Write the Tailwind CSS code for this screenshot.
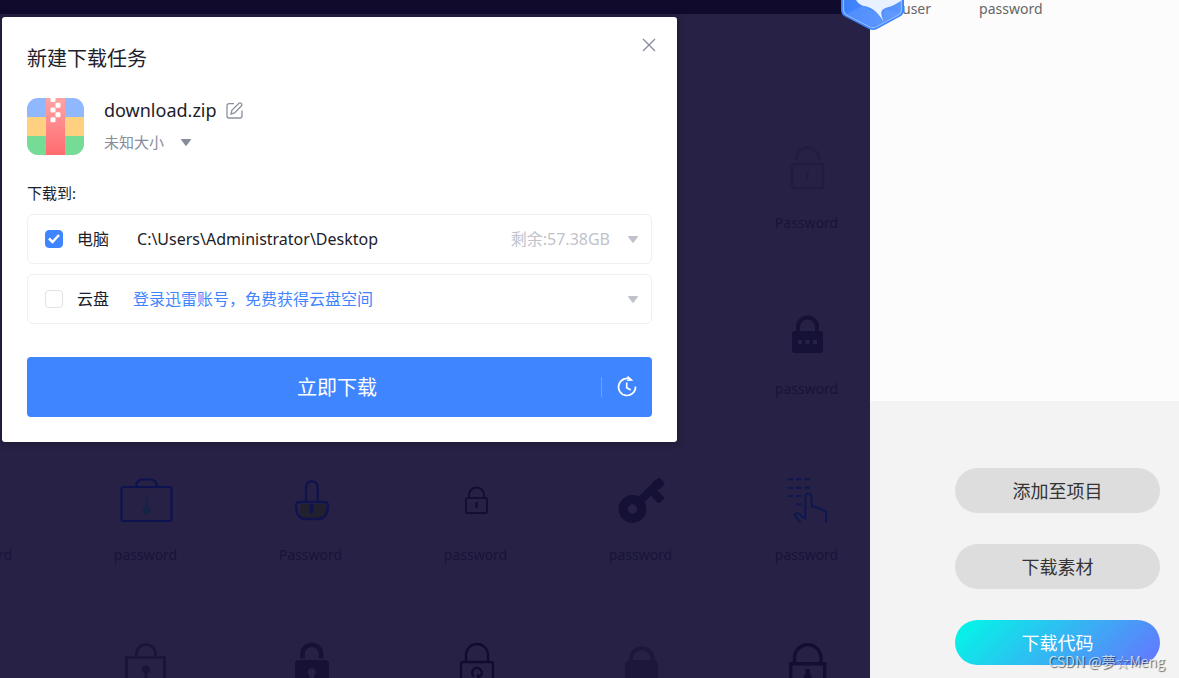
<!DOCTYPE html>
<html lang="zh-CN">
<head>
<meta charset="utf-8">
<meta name="viewport" content="width=device-width, initial-scale=1">
<title>新建下载任务</title>
<script src="https://cdn.jsdelivr.net/npm/@tailwindcss/browser@4"></script>
</head>
<body class="relative flex h-screen overflow-hidden bg-[#f3f3f3] font-['Noto_Sans','Noto_Sans_CJK_SC',sans-serif]">

<main class="min-w-0 flex-1 overflow-hidden bg-[#272245]">
  <div class="h-3.5 bg-[#100b2d]"></div>
  <ul class="mt-[124px] -ml-[102px] grid w-max auto-rows-[166px] grid-cols-[repeat(5,165px)_167px] text-sm leading-5 text-[#18133a]">
    <li class="col-start-6 flex flex-col items-center gap-[15px]">
      <svg class="size-[60px]" viewBox="0 0 60 60" fill="none" stroke="#211c40" stroke-width="2.5"><rect x="15" y="26" width="31" height="24" rx="2"/><path d="M19 22v-1a11.500 11.500 0 0 1 23 0v1"/><ellipse cx="30.500" cy="37" rx="1.500" ry="4.500" fill="#211c40" stroke="none"/></svg>
      <span>Password</span>
    </li>
    <li class="col-start-6 flex flex-col items-center gap-[15px]">
      <svg class="size-[60px]" viewBox="0 0 60 60" fill="none"><path d="M21 28v-5a9.500 9.500 0 0 1 19 0v5" stroke="#161136" stroke-width="4"/><path fill-rule="evenodd" fill="#161136" d="M18 27h25a3 3 0 0 1 3 3v16a3 3 0 0 1-3 3H18a3 3 0 0 1-3-3V30a3 3 0 0 1 3-3zM21 36v4h4v-4zM28.500 36v4h4v-4zM36 36v4h4v-4z"/></svg>
      <span>password</span>
    </li>
    <li class="col-start-1 flex flex-col items-center gap-[15px]">
      <span class="size-[60px]"></span>
      <span>password</span>
    </li>
    <li class="flex flex-col items-center gap-[15px]">
      <svg class="size-[60px]" viewBox="0 0 60 60" fill="none" stroke="#0d1250" stroke-width="2.200"><rect x="5.500" y="17" width="50" height="34" rx="2"/><path d="M20 16.500c0-4 3-7 6-7h9c3 0 6 3 6 7"/><path stroke="#142348" d="M30.500 27v12"/><circle cx="30.500" cy="40.500" r="4" fill="#142348" stroke="none"/></svg>
      <span>password</span>
    </li>
    <li class="flex flex-col items-center gap-[15px]">
      <svg class="size-[60px]" viewBox="0 0 60 60" fill="none" stroke="#10134c" stroke-width="2.400"><path d="M19 36q0-2 2-2h24v8q0 6-6 6H26q-7 0-7-6z" fill="#21202e" stroke="none"/><path d="M25 31V17a5.800 5.800 0 0 1 11.600 0v14M19 32h24q4 0 4 4c0 8-4 13-9 13H24c-5 0-9-5-9-13q0-4 4-4z"/><path d="M28.500 37.500a2.300 2.300 0 1 1 4 0l-.7 6h-2.500z" fill="#10134c" stroke="none"/></svg>
      <span>Password</span>
    </li>
    <li class="flex flex-col items-center gap-[15px]">
      <svg class="size-[60px]" viewBox="0 0 60 60" fill="none" stroke="#130e33" stroke-width="2"><rect x="20" y="28" width="21" height="15" rx="1.500"/><path d="M23 28v-3a7.500 7.500 0 0 1 15 0v3"/><path d="M30.500 32v6" stroke-width="2.500"/></svg>
      <span>password</span>
    </li>
    <li class="flex flex-col items-center gap-[15px]">
      <svg class="size-[60px]" viewBox="0 0 60 60" fill="none" stroke="#151035" stroke-width="9.300"><circle cx="21.500" cy="39" r="9.300"/><path stroke-width="8" d="M28 32 45.500 14.500M40 20l6 6"/><path stroke-width="4" stroke-linejoin="round" fill="#151035" d="m44 13 4-3 3.500 3.500-4 4zM43 26l3-3 5 5-3.500 3z"/></svg>
      <span>password</span>
    </li>
    <li class="flex flex-col items-center gap-[15px]">
      <svg class="size-[60px]" viewBox="0 0 60 60" fill="none" stroke="#0e174f" stroke-width="2"><path d="M10.700 9.300H16M19 9.300h5.300M27.500 9.300h5.500M10.700 17.700H16M19 17.700h5.300M27.500 17.700h5.500M10.700 26H16M19 26h5.300M19 34.300h5.300"/><path stroke-linejoin="round" d="m23.700 52.700-5.500-6.500q-1.500-2 .8-2.700 2.500-.6 4.500 1.500l4.800 4V26.500a3 3 0 0 1 6-.2L35 36.500c5 .2 9 2.500 14.200 5.200L49 52.700"/></svg>
      <span>password</span>
    </li>
    <li class="col-start-2 flex justify-center">
      <svg class="size-[60px]" viewBox="0 0 60 60" fill="none" stroke="#1a1538" stroke-width="2.700"><path d="M10.500 21.500h38V56h-38zM20.500 21v-3a9.500 9.500 0 0 1 19 0v3M30 34v12"/><circle cx="30" cy="33.500" r="4" fill="#1a1538" stroke="none"/></svg>
    </li>
    <li class="flex justify-center">
      <svg class="size-[60px]" viewBox="0 0 60 60" fill="none"><path stroke="#171235" stroke-width="4.500" d="M21.500 22.500V18a9.300 9.300 0 0 1 18.600 0v4.500"/><path fill="#171235" d="M18 24h26a4 4 0 0 1 4 4v28H14V28a4 4 0 0 1 4-4z"/><path fill="#272245" d="M28.500 39.500a4 4 0 1 1 4.500 0V48h-4.500z"/></svg>
    </li>
    <li class="flex justify-center">
      <svg class="size-[60px]" viewBox="0 0 60 60" fill="none" stroke="#100b30" stroke-width="2.300"><path d="M17 26h28q2 0 2 2v28H15V28q0-2 2-2zM20 26v-7a11 11 0 0 1 22 0v7M28 40.500a4.800 4.800 0 1 1 6 0q-2 .5-2.500-1.500M32 38v10"/></svg>
    </li>
    <li class="flex justify-center">
      <svg class="size-[60px]" viewBox="0 0 60 60" fill="none"><path stroke="#1d183b" stroke-width="4" d="M20 26v-3a10.800 10.800 0 0 1 21.600 0v3"/><path fill="#1d183b" d="M18 24h26q3 1 3 5v27H14V29q0-4 4-5z"/></svg>
    </li>
    <li class="flex justify-center">
      <svg class="size-[60px]" viewBox="0 0 60 60" fill="none" stroke="#130e32" stroke-width="3.500"><path d="M13.700 27.700h34V56h-34zM17.500 27v-5a13 13 0 0 1 26.500 0v5"/><path stroke-width="4.500" d="M30.700 33v12"/><path d="M27 39h7.500v4H27z" fill="#130e32" stroke="none"/></svg>
    </li>
  </ul>
</main>

<aside class="flex w-[309px] shrink-0 flex-col">
  <div class="flex h-[401px] shrink-0 gap-12 bg-[#fcfcfc] pl-8 text-sm leading-[18px] text-[#666]">
    <span>user</span>
    <span>password</span>
  </div>
  <div class="flex flex-1 flex-col gap-[31px] bg-[#f3f3f3] pt-[67px] pr-[19px] pl-[85px] text-lg text-[#333]">
    <button type="button" class="h-[45px] shrink-0 rounded-full bg-[#ddd]">添加至项目</button>
    <button type="button" class="h-[45px] shrink-0 rounded-full bg-[#ddd]">下载素材</button>
    <button type="button" class="h-[45px] shrink-0 rounded-full bg-[linear-gradient(135deg,#00fae6,#6674ff)] text-white">下载代码</button>
  </div>
</aside>

<svg class="absolute top-0 left-[841px] h-[31px] w-16" viewBox="0 0 64 31" aria-hidden="true">
  <defs><linearGradient id="hex" x1="0" y1="0" x2="1" y2="0"><stop offset="0" stop-color="#3a7ffb"/><stop offset="1" stop-color="#5c96ff"/></linearGradient></defs>
  <path fill="#3f83fc" d="M0 0h63v10q0 4-4 6.500L36 29q-4 2-8 0L4 16.500Q0 14 0 10z"/>
  <path fill="url(#hex)" stroke="#8db8ff" stroke-width="1.300" d="M2.500-2V10q0 3 3 5L29 27q3 1.500 6 0l22.500-12q3-2 3-5V-2z"/>
  <path fill="#72a5ff" fill-opacity=".35" d="m5 14 17-8 14 7 5 8 3-12 15 5-24 12q-3 1.500-6 0z"/>
  <path fill="#e8f1ff" d="M15 0q2 4 6 5.500 5 .5 8.500 2.500Q36 11 42.500 21.500 40 15 40.300 12q.5-2.500 4-4Q55 5 61 0z"/>
</svg>

<section role="dialog" aria-labelledby="dialog-title" class="absolute top-[17px] left-0.5 w-[675px] rounded-[3px] bg-white px-[25px] pt-6 pb-[25px] text-[#1d2129] shadow-[0_0_6px_2px_rgba(0,0,0,0.25)]">
  <header class="flex items-start justify-between">
    <h1 id="dialog-title" class="pt-0.5 text-xl leading-8">新建下载任务</h1>
    <button type="button" aria-label="关闭" class="-mt-[11px] -mr-3 p-2">
      <svg class="size-3.5" viewBox="0 0 14 14" fill="none" stroke="#868c9b" stroke-width="1.300"><path d="m1 1 12 12M13 1 1 13"/></svg>
    </button>
  </header>

  <div class="mt-[23px] flex gap-5">
    <svg class="size-[57px]" viewBox="0 0 57 57" aria-hidden="true">
      <defs>
        <clipPath id="tile"><rect width="57" height="57" rx="11"/></clipPath>
        <linearGradient id="zip" x1="0" y1="0" x2="0" y2="1"><stop offset="0" stop-color="#ffa3a3"/><stop offset="1" stop-color="#ff6b6f"/></linearGradient>
      </defs>
      <g clip-path="url(#tile)">
        <path fill="#90b8ff" d="M0 0h57v19H0z"/><path fill="#ffd080" d="M0 19h57v19H0z"/><path fill="#74dc94" d="M0 38h57v19H0z"/>
        <path fill="url(#zip)" d="M19 0h19v57H19z"/>
        <g fill="#fff"><rect x="23.500" y="-1" width="5" height="5" rx="1.300"/><rect x="28.500" y="4.700" width="5" height="5" rx="1.300"/><rect x="23.500" y="9.500" width="5" height="5" rx="1.300"/><rect x="28.500" y="14.300" width="5" height="5" rx="1.300"/><rect x="23.500" y="19.200" width="5" height="5" rx="1.300"/></g>
      </g>
    </svg>
    <div>
      <div class="flex items-center gap-[9px]">
        <span class="text-lg leading-6">download.zip</span>
        <button type="button" aria-label="重命名"><svg class="size-[17px]" viewBox="0 0 17 17" fill="none" stroke="#8d919e" stroke-width="1.300"><path d="M8 1.700H3a2 2 0 0 0-2 2V14a2 2 0 0 0 2 2h11a2 2 0 0 0 2-2V8.500"/><path d="m5 12 .8-3.600L13 1.300q1-.8 2 0l.5.5q.8 1 0 2L8.600 11z"/></svg></button>
      </div>
      <div class="mt-[9px] flex items-center gap-[17px] text-[15px] leading-[22px] text-[#868c9b]">
        <span>未知大小</span>
        <button type="button" aria-label="选择大小"><svg class="h-[7px] w-2.5" viewBox="0 0 10 7" fill="#868c9b"><path d="M.5 0h9q.6.300.3.900L5.600 6.600q-.6.500-1.200 0L.2.900Q0 .3.500 0z"/></svg></button>
      </div>
    </div>
  </div>

  <p class="mt-[27px] text-[15px] leading-[22px]">下载到:</p>

  <div class="mt-[10px] flex h-[50px] items-center rounded-md border border-[#eff0f2] pr-[13px] pl-[17px] text-base">
    <label class="flex items-center gap-3.5">
      <span class="grid size-[18px] *:col-start-1 *:row-start-1">
        <input type="checkbox" checked class="peer size-[18px] appearance-none rounded-[4px] border border-[#e0e2e5] checked:border-[#3f85ff] checked:bg-[#3f85ff]">
        <svg class="pointer-events-none invisible size-[18px] peer-checked:visible" viewBox="0 0 18 18" fill="none" stroke="#fff" stroke-width="2.500"><path d="m4 8.500 3.500 3.500L14 5"/></svg>
      </span>
      <span>电脑</span>
    </label>
    <input type="text" aria-label="下载路径" value="C:\Users\Administrator\Desktop" class="ml-7 min-w-0 flex-1 bg-transparent outline-none">
    <span class="text-[#c0c3ca]">剩余:57.38GB</span>
    <button type="button" aria-label="选择文件夹" class="ml-[18px]"><svg class="h-[7px] w-2.5" viewBox="0 0 10 7" fill="#bfc2ca"><path d="M.5 0h9q.6.300.3.900L5.600 6.600q-.6.500-1.200 0L.2.900Q0 .3.500 0z"/></svg></button>
  </div>

  <div class="mt-2.5 flex h-[50px] items-center rounded-md border border-[#eff0f2] pr-[13px] pl-[17px] text-base">
    <label class="flex items-center gap-3.5">
      <span class="grid size-[18px]">
        <input type="checkbox" class="size-[18px] appearance-none rounded-[4px] border border-[#e0e2e5] checked:bg-[#3f85ff]">
      </span>
      <span>云盘</span>
    </label>
    <a href="#" class="ml-6 text-[#3f85ff]">登录迅雷账号，免费获得云盘空间</a>
    <button type="button" aria-label="选择云盘目录" class="ml-auto"><svg class="h-[7px] w-2.5" viewBox="0 0 10 7" fill="#bfc2ca"><path d="M.5 0h9q.6.300.3.900L5.600 6.600q-.6.500-1.200 0L.2.900Q0 .3.500 0z"/></svg></button>
  </div>

  <div class="mt-[33px] flex h-[60px] items-center rounded-[4px] bg-[#3f85ff] text-white">
    <button type="button" class="h-full flex-1 pt-0.5 pl-[46px] text-xl">立即下载</button>
    <button type="button" aria-label="稍后下载" class="flex h-5 w-[51px] items-center justify-center border-l border-[#6aa0ff]">
      <svg class="size-[22px]" viewBox="0 0 22 22" fill="none" stroke="#fff" stroke-width="1.700"><path d="M15 3.500A8.500 8.500 0 1 0 19.500 10.500"/><path d="M10.700 6.500v5.200l4 2.300"/><path d="M11.500.5 15.500 4 11 4.300" stroke-width="1.500"/></svg>
    </button>
  </div>
</section>

<p class="absolute right-3.5 bottom-[7px] text-sm leading-5 whitespace-nowrap font-['Noto_Sans_CJK_SC',sans-serif] text-white/70 [text-shadow:1px_1px_1px_rgba(0,0,0,0.6)]">CSDN @夢☆Meng</p>
</body>
</html>
